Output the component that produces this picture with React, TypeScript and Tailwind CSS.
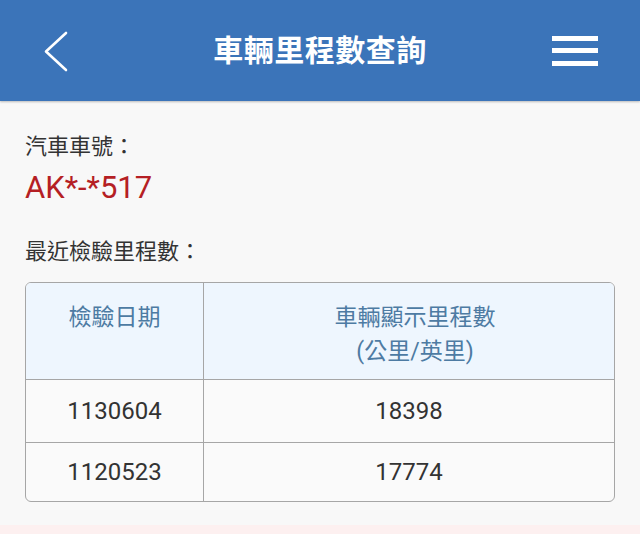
const font = "font-['Roboto','Noto_Sans_CJK_TC',sans-serif]"

const rows = [
  { date: "1130604", km: "18398" },
  { date: "1120523", km: "17774" },
]

export default function App() {
  return (
    <div className={`${font} flex h-[534px] w-[640px] flex-col overflow-hidden bg-[#f8f8f8]`}>
      <header className="flex h-[101px] shrink-0 items-center justify-between bg-[#3b74b9] px-[42px] shadow-[0_1px_2px_rgba(0,0,0,0.25)]">
        <div className="flex w-[56px] items-center">
          <svg width="28" height="42" viewBox="0 0 28 42" fill="none">
            <path d="M24 3 L4 21.5 L24 40" stroke="white" strokeWidth="2.6" strokeLinecap="round" strokeLinejoin="round" />
          </svg>
        </div>
        <h1 className="text-[30px] font-bold tracking-[0.5px] text-white">車輛里程數查詢</h1>
        <div className="flex w-[56px] justify-end">
          <div className="flex w-[46px] flex-col gap-[7.5px]">
            <span className="block h-[5px] bg-white" />
            <span className="block h-[5px] bg-white" />
            <span className="block h-[5px] bg-white" />
          </div>
        </div>
      </header>

      <main className="flex-1 px-[25px]">
        <p className="mt-[31px] text-[22px] leading-[30px] text-[#333]">汽車車號：</p>
        <p className="mt-[6px] text-[31px] leading-[40px] text-[#b51f24]">AK*-*517</p>
        <p className="mt-[29px] text-[22px] leading-[30px] text-[#333]">最近檢驗里程數：</p>

        <div className="mt-[15px] w-[590px] overflow-hidden rounded-[6px] border border-[#a6a6a6] bg-[#fafafa]">
          <div className="flex h-[97px] border-b border-[#a6a6a6] bg-[#eef6fe] text-[23px] leading-[34px] text-[#4d7ba3]">
            <div className="w-[178px] border-r border-[#a6a6a6] pt-[18px] text-center">檢驗日期</div>
            <div className="flex-1 pt-[18px] pl-[12px] text-center">
              車輛顯示里程數
              <br />
              (公里/英里)
            </div>
          </div>
          {rows.map((r, i) => (
            <div
              key={r.date}
              className={`flex items-center text-[24px] text-[#333] ${i === 0 ? "h-[63px] border-b border-[#a6a6a6]" : "h-[58px]"}`}
            >
              <div className="flex h-full w-[178px] items-center justify-center border-r border-[#a6a6a6]">{r.date}</div>
              <div className="flex h-full flex-1 items-center justify-center">{r.km}</div>
            </div>
          ))}
        </div>
      </main>

      <div className="h-[9px] shrink-0 bg-[#fdf0f0]" />
    </div>
  )
}
